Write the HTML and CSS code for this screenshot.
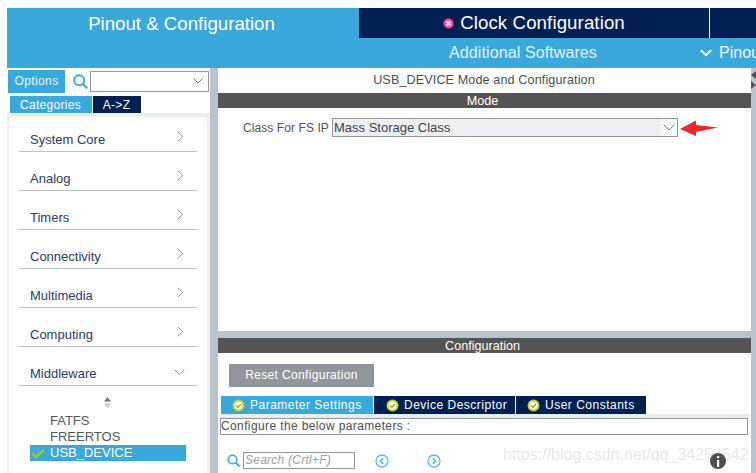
FILE: index.html
```html
<!DOCTYPE html>
<html lang="en">
<head>
<meta charset="utf-8">
<title>USB_DEVICE Mode and Configuration</title>
<link rel="stylesheet" href="styles.css">
</head>
<body>
<div class="app">
  <header class="header">
    <div class="main-tab">Pinout &amp; Configuration</div>
    <div class="header-right">
      <div class="top-tabs">
        <div class="clock-tab">
          <svg class="err" width="11" height="11" viewBox="0 0 11 11"><circle cx="5.5" cy="5.5" r="5" fill="#e85aa8" stroke="#a8107a"/><path d="M3.500 3.500l4 4M7.500 3.500l-4 4" stroke="#fff" stroke-width="1.500"/></svg>
          Clock Configuration
        </div>
        <div class="other-tab"></div>
      </div>
      <div class="sub-tabs">
        <div class="soft">Additional Softwares</div>
        <div class="pinout">
          <svg width="12" height="8" viewBox="0 0 12 8"><path d="M1 1.200l5 5 5-5" fill="none" stroke="#fff" stroke-width="2"/></svg>
          Pinout
        </div>
      </div>
    </div>
  </header>
  <div class="body">
    <aside class="left">
      <div class="opt-row">
        <div class="options">Options</div>
        <svg class="mag" width="15" height="15" viewBox="0 0 15 15"><circle cx="6.200" cy="6.200" r="5" fill="none" stroke="#39a9dc" stroke-width="2"/><path d="M9.800 9.800l4.400 4.400" stroke="#39a9dc" stroke-width="2"/></svg>
        <div class="combo"><svg width="10" height="6" viewBox="0 0 10 6"><path d="M.5.5l4.500 4.500 4.500-4.500" fill="none" stroke="#7c8388"/></svg></div>
      </div>
      <div class="cat-row">
        <div class="cat on">Categories</div>
        <div class="cat off">A-&gt;Z</div>
      </div>
      <div class="tree">
        <div class="tree-in">
          <div class="item"><span>System Core</span><svg class="chev" width="7" height="11" viewBox="0 0 7 11"><path d="M.7.7l5 4.800-5 4.800" fill="none" stroke="#8a9298"/></svg></div>
          <div class="item"><span>Analog</span><svg class="chev" width="7" height="11" viewBox="0 0 7 11"><path d="M.7.7l5 4.800-5 4.800" fill="none" stroke="#8a9298"/></svg></div>
          <div class="item"><span>Timers</span><svg class="chev" width="7" height="11" viewBox="0 0 7 11"><path d="M.7.7l5 4.800-5 4.800" fill="none" stroke="#8a9298"/></svg></div>
          <div class="item"><span>Connectivity</span><svg class="chev" width="7" height="11" viewBox="0 0 7 11"><path d="M.7.7l5 4.800-5 4.800" fill="none" stroke="#8a9298"/></svg></div>
          <div class="item"><span>Multimedia</span><svg class="chev" width="7" height="11" viewBox="0 0 7 11"><path d="M.7.7l5 4.800-5 4.800" fill="none" stroke="#8a9298"/></svg></div>
          <div class="item"><span>Computing</span><svg class="chev" width="7" height="11" viewBox="0 0 7 11"><path d="M.7.7l5 4.800-5 4.800" fill="none" stroke="#8a9298"/></svg></div>
          <div class="item"><span>Middleware</span><svg class="chev-d" width="11" height="7" viewBox="0 0 11 7"><path d="M.7.7l4.800 5 4.800-5" fill="none" stroke="#8a9298"/></svg></div>
          <div class="sort"><svg width="9" height="11" viewBox="0 0 9 11"><path d="M4.500 0l3.500 4.500H1z" fill="#6d7478"/><path d="M4.500 11L1 6.500h7z" fill="#c4c9cc"/></svg></div>
          <div class="sub">FATFS</div>
          <div class="sub">FREERTOS</div>
          <div class="sub sel"><svg class="tick" width="15" height="11" viewBox="0 0 15 11"><path d="M1 5l4 4 8-7" fill="none" stroke="#a8c62a" stroke-width="2.400"/></svg>USB_DEVICE</div>
        </div>
      </div>
    </aside>
    <main class="right">
      <div class="mode-pane">
        <div class="title">USB_DEVICE Mode and Configuration</div>
        <div class="bar">Mode</div>
        <div class="field">
          <label class="field-label">Class For FS IP</label>
          <div class="select"><span>Mass Storage Class</span><span class="sel-btn"><svg width="12" height="7" viewBox="0 0 12 7"><path d="M.7.7L6 6l5.300-5.300" fill="none" stroke="#7c8388"/></svg></span></div>
          <svg class="arrow" width="40" height="16" viewBox="0 0 40 16"><path d="M1 9L17 .5V5l22 2.500L17 12v4z" fill="#f4252b"/></svg>
        </div>
      </div>
      <div class="conf-pane">
        <div class="bar">Configuration</div>
        <div class="reset">Reset Configuration</div>
        <div class="tabs">
          <div class="tab active"><svg class="ok" width="13" height="13" viewBox="0 0 12 12"><circle cx="6" cy="6" r="5.500" fill="#c6d32c"/><circle cx="6" cy="6" r="3.600" fill="#fff"/><path d="M3.800 6l1.700 1.700 2.800-3" fill="none" stroke="#8da01c" stroke-width="1.200"/></svg>Parameter Settings</div>
          <div class="tab dev"><svg class="ok" width="13" height="13" viewBox="0 0 12 12"><circle cx="6" cy="6" r="5.500" fill="#c6d32c"/><circle cx="6" cy="6" r="3.600" fill="#fff"/><path d="M3.800 6l1.700 1.700 2.800-3" fill="none" stroke="#8da01c" stroke-width="1.200"/></svg>Device Descriptor</div>
          <div class="tab usr"><svg class="ok" width="13" height="13" viewBox="0 0 12 12"><circle cx="6" cy="6" r="5.500" fill="#c6d32c"/><circle cx="6" cy="6" r="3.600" fill="#fff"/><path d="M3.800 6l1.700 1.700 2.800-3" fill="none" stroke="#8da01c" stroke-width="1.200"/></svg>User Constants</div>
        </div>
        <div class="params">
          <div class="hint">Configure the below parameters :</div>
          <div class="search-row">
            <svg width="13" height="13" viewBox="0 0 13 13"><circle cx="5.500" cy="5.500" r="4.300" fill="none" stroke="#39a9dc" stroke-width="1.600"/><path d="M8.500 8.500l4 4" stroke="#39a9dc" stroke-width="1.800"/></svg>
            <div class="search">Search (Crtl+F)</div>
            <svg class="nav nav-l" width="14" height="14" viewBox="0 0 14 14"><circle cx="7" cy="7" r="6" fill="none" stroke="#5bbbe6" stroke-width="1.300"/><path d="M8.200 4.300L5.500 7l2.700 2.700" fill="none" stroke="#39a9dc" stroke-width="1.300"/></svg>
            <svg class="nav nav-r" width="14" height="14" viewBox="0 0 14 14"><circle cx="7" cy="7" r="6" fill="none" stroke="#5bbbe6" stroke-width="1.300"/><path d="M5.800 4.300L8.500 7l-2.700 2.700" fill="none" stroke="#39a9dc" stroke-width="1.300"/></svg>
          </div>
        </div>
      </div>
    </main>
    <div class="scroll"><svg width="5" height="22" viewBox="0 0 5 22"><path d="M5 1L0 5l5 4zM0 11l5 4-5 4z" fill="#555"/></svg></div>
  </div>
</div>
<svg class="info" width="16" height="16" viewBox="0 0 16 16"><circle cx="8" cy="8" r="8" fill="#4d4f50"/><rect x="7" y="7" width="2.200" height="7" fill="#fff"/><rect x="7" y="3" width="2.200" height="2.200" fill="#fff"/></svg>
<div class="watermark">https://blog.csdn.net/qq_34254642</div>
</body>
</html>
```
FILE: styles.css
```css
html, body { margin: 0; padding: 0; background: #fff; }
body { width: 756px; height: 473px; overflow: hidden; position: relative; font-family: "Liberation Sans", Arial, sans-serif; color: #3d4449; }
.app { padding: 8px 0 0 7px; display: flex; flex-direction: column; height: 465px; box-sizing: content-box; }
.header { display: flex; height: 60px; background: #39a9dc; color: #fff; flex: none; }
.main-tab { width: 351px; height: 30px; line-height: 31px; text-align: center; font-size: 18.67px; flex: none; box-sizing: border-box; padding-right: 2px; }
.header-right { flex: 1; min-width: 0; display: flex; flex-direction: column; padding-left: 1px; }
.top-tabs { display: flex; height: 30px; flex: none; }
.clock-tab { width: 351px; background: #002052; border-right: 1px solid #fff; display: flex; align-items: center; justify-content: center; gap: 6px; font-size: 18.67px; letter-spacing: .1px; box-sizing: border-box; }
.other-tab { flex: 1; background: #002052; }
.sub-tabs { display: flex; height: 30px; align-items: center; font-size: 16px; color: #e3f2fa; }
.soft { width: 328px; text-align: center; flex: none; letter-spacing: .1px; margin-right: 13px; }
.pinout { display: flex; align-items: center; gap: 7px; white-space: nowrap; color: #eef8fc; }
.body { flex: 1; display: flex; min-height: 0; background: #b8c4cb; }
.left { width: 203px; flex: none; background: #fff; display: flex; flex-direction: column; margin-right: 8px; }
.opt-row { display: flex; align-items: center; padding: 1px 0 0 1px; flex: none; box-sizing: border-box; height: 25px; }
.options { width: 57px; height: 23px; background: #39a9dc; color: #e6f4fb; font-size: 12px; line-height: 23px; text-align: center; letter-spacing: .4px; flex: none; }
.mag { margin: 0 2px 0 8px; flex: none; }
.combo { width: 119px; height: 21px; border: 1px solid #8f979c; box-sizing: border-box; display: flex; align-items: center; justify-content: flex-end; padding-right: 5px; flex: none; }
.cat-row { display: flex; gap: 1px; padding: 3px 0 0 3px; height: 20px; flex: none; box-sizing: border-box; }
.cat { height: 17px; line-height: 18px; color: #fff; font-size: 12px; text-align: center; letter-spacing: .3px; padding-right: 1px; box-sizing: border-box; }
.cat.on { width: 82px; background: #39a9dc; }
.cat.off { width: 48px; background: #002052; }
.tree { flex: 1; background: #edf0f2; padding: 4px 3px 0 2px; min-height: 0; }
.tree-in { background: #fff; height: 100%; padding: 0 10px; overflow: hidden; }
.item { display: flex; align-items: center; justify-content: space-between; height: 39px; box-sizing: border-box; border-bottom: 1px solid #b8c4cb; width: 178px; font-size: 13px; color: #2c3a66; padding: 11px 9px 0 11px; }
.item span { position: relative; top: 2px; }
.item:first-child { height: 35px; padding-top: 7px; }
.chev, .chev-d { position: relative; flex: none; }
.chev { margin-right: 4px; top: -1px; }
.chev-d { margin-right: 3px; top: 1px; }
.sort { display: flex; justify-content: center; padding: 11px 0 0 0; width: 176px; height: 14px; box-sizing: content-box; }
.sub { height: 16px; line-height: 16px; width: 156px; margin-left: 11px; padding-left: 20px; font-size: 13px; box-sizing: border-box; color: #53585c; position: relative; }
.sub.sel { background: #39a9dc; color: #fff; }
.sort + .sub { margin-top: 2px; }
.tick { position: absolute; left: 1px; top: 3px; }
.right { width: 533px; flex: none; display: flex; flex-direction: column; min-width: 0; gap: 7px; }
.mode-pane { height: 263px; background: #fff; flex: none; }
.title { height: 25px; line-height: 25px; text-align: center; font-size: 12.6px; color: #4a4f54; letter-spacing: .12px; padding-right: 1px; }
.bar { height: 15px; line-height: 16px; background: #535453; color: #fff; text-align: center; font-size: 12.6px; padding-right: 4px; }
.field { display: flex; align-items: center; padding: 10px 0 0 25px; font-size: 12px; }
.field-label { width: 89px; flex: none; color: #4d5358; white-space: nowrap; letter-spacing: .08px; }
.select { width: 346px; height: 19px; box-sizing: border-box; border: 1px solid #8f979c; background: #edf0f2; display: flex; justify-content: space-between; font-size: 13px; line-height: 17px; padding-left: 1px; flex: none; }
.sel-btn { width: 17px; background: #f6f7f8; display: flex; align-items: center; justify-content: center; }
.arrow { margin-left: 1px; flex: none; }
.conf-pane { flex: 1; background: #fff; min-height: 0; display: flex; flex-direction: column; }
.reset { width: 145px; height: 23px; line-height: 23px; margin: 11px 0 0 11px; background: #8f979c; color: #fff; font-size: 12px; text-align: center; letter-spacing: .35px; flex: none; }
.tabs { display: flex; gap: 1px; height: 18px; margin: 9px 0 0 3px; flex: none; }
.tab { display: flex; align-items: center; gap: 5px; font-size: 12px; letter-spacing: .5px; color: #fff; background: #002052; padding-left: 11px; box-sizing: border-box; white-space: nowrap; }
.tab.active { width: 152px; background: #39a9dc; }
.tab.dev { width: 141px; padding-left: 12px; }
.tab.usr { width: 130px; }
.params { flex: 1; margin-left: 2px; padding-top: 4px; margin-right: 1px; background: linear-gradient(#e9edf0, #e9edf0) top/100% 4px no-repeat, #fff; }
.hint { width: 528px; height: 17px; line-height: 15px; box-sizing: border-box; border: 1px solid #8f979c; font-size: 12px; color: #4a4f54; padding-left: 0; letter-spacing: .38px; background: #fff; }
.search-row { display: flex; align-items: center; padding: 17px 0 0 7px; }
.search { width: 112px; height: 17px; margin-left: 3px; line-height: 15px; box-sizing: border-box; border: 1px solid #8f979c; color: #9aa1a6; font-size: 12px; font-style: italic; padding-left: 1px; letter-spacing: .25px; flex: none; }
.nav-l { margin-left: 20px; }
.nav-r { margin-left: 38px; }
.scroll { flex: 1; display: flex; align-items: flex-start; background: #b8c4cb; padding-top: 2px; }
.info { position: absolute; left: 710px; top: 453px; }
.watermark { position: absolute; left: 503px; top: 446px; font-size: 16px; color: rgba(120,130,135,.2); white-space: nowrap; }
```
